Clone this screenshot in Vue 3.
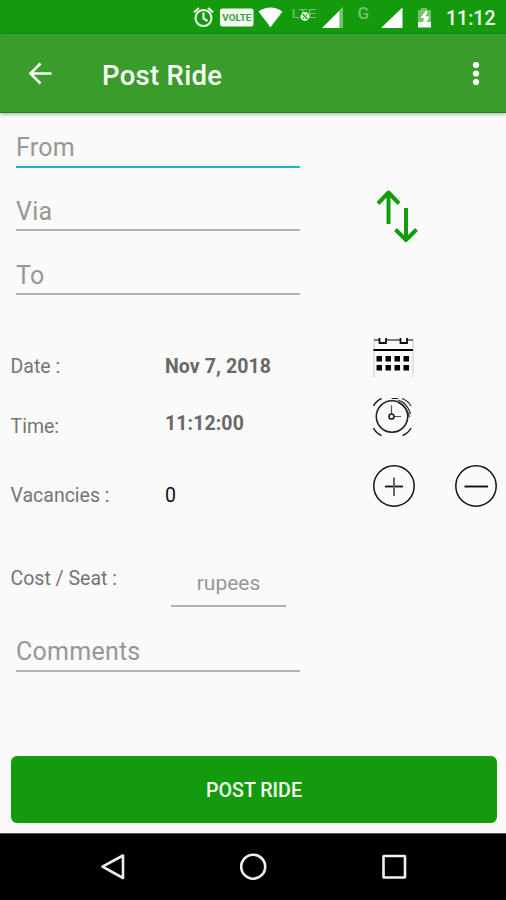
<script setup>
import { ref } from 'vue'

const route = [
  { label: 'From', size: 'first', focused: true },
  { label: 'Via', size: 'second', focused: false },
  { label: 'To', size: 'third', focused: false },
]
const date = ref('Nov 7, 2018')
const time = ref('11:12:00')
const vacancies = ref(0)
const dayColumns = [3.5, 12.5, 21.5, 30.5]
const dayRows = [19, 28]
</script>

<template>
  <div class="screen">
    <header class="status">
      <svg class="status-icons" width="250" height="34" viewBox="0 0 250 34">
        <g fill="none" stroke="#f2fbf0" stroke-width="2.1">
          <circle cx="17.5" cy="18" r="8" />
          <path d="M17.5 12.5V18.5L21.5 21M8 12.2L13 8M27 12.2L22 8" />
        </g>
        <rect x="34" y="8.5" width="33.5" height="18" rx="2.5" fill="#f5fcf4" />
        <text x="50.8" y="20.8" class="volte" text-anchor="middle" textLength="29" lengthAdjust="spacingAndGlyphs">VOLTE</text>
        <path d="M72.5 11.5Q84.5 3.5 96.5 11.5L84.5 27.2Z" fill="#fff" />
        <text x="105.5" y="17.5" class="lte" textLength="25" lengthAdjust="spacingAndGlyphs">LTE</text>
        <circle cx="119" cy="16.5" r="4.4" fill="#e9f8e6" />
        <path d="M116.5 14L121.5 19M117 18.5L118 17.5M120 15.5L121 14.5" stroke="#159c0e" stroke-width="1.2" />
        <path d="M153.5 10L157 7V28H153.5Z" fill="#72c36c" />
        <path d="M136 28L153.5 10.5V28Z" fill="#fff" />
        <text x="171.5" y="19" class="carrier">G</text>
        <path d="M195 28L216.5 7.5V28Z" fill="#fff" />
        <path d="M232 10H235V8H241V10H245V22H232Z" fill="#72c36c" />
        <path d="M232 22H245V27.5H232Z" fill="#fff" />
        <path d="M239.5 11L234.5 18H238L236.5 24H240L243.5 16.5H239.5L242 11Z" fill="#fff" />
      </svg>
      <span class="clock">11:12</span>
    </header>

    <nav class="appbar">
      <svg class="back" width="26" height="26" viewBox="0 0 26 26">
        <path d="M24.5 13.5H3.5M13.5 3.5L3.5 13.5L13.5 23.5" fill="none" stroke="#fff" stroke-width="2.6" />
      </svg>
      <h1>Post Ride</h1>
      <svg class="more" width="8" height="26" viewBox="0 0 8 26" fill="#fff">
        <circle cx="4" cy="5" r="3.1" />
        <circle cx="4" cy="13.5" r="3.1" />
        <circle cx="4" cy="22" r="3.1" />
      </svg>
    </nav>

    <main>
      <section class="route">
        <div class="fields">
          <div v-for="f in route" :key="f.label" class="field" :class="[f.size, { focused: f.focused }]">
            {{ f.label }}
          </div>
        </div>
        <svg class="swap" width="42" height="56" viewBox="0 0 42 56" fill="none" stroke="#149c10" stroke-width="4" stroke-linejoin="round">
          <path d="M12.5 36V5M2 15.5L12.5 4.5L23 15.5" />
          <path d="M30 20V52M19.5 41.5L30 52L40.5 41.5" />
        </svg>
      </section>

      <section class="row date">
        <span class="label">Date :</span>
        <strong class="value">{{ date }}</strong>
        <svg class="icon" width="42" height="42" viewBox="0 0 42 42">
          <path d="M1 40V1M40 40V1" stroke="#ccc" stroke-width="1" />
          <path d="M1 3H6M13 3H27M34 3H40" stroke="#555" stroke-width="1.4" />
          <path d="M6.5 1V6H13V1M27.5 1V6H34V1" fill="none" stroke="#111" stroke-width="1.8" />
          <path d="M0.5 13H40" stroke="#000" stroke-width="2" />
          <template v-for="y in dayRows" :key="y">
            <rect v-for="x in dayColumns" :key="x" :x="x" :y="y" width="5.5" height="5.5" fill="#000" />
          </template>
        </svg>
      </section>

      <section class="row time">
        <span class="label">Time:</span>
        <strong class="value">{{ time }}</strong>
        <svg class="icon" width="42" height="42" viewBox="0 0 42 42" fill="none" stroke="#222">
          <circle cx="19" cy="19.5" r="15.7" stroke-width="1.6" />
          <path d="M18.5 8.5V17M21 19.5H28" stroke="#555" stroke-width="1.2" />
          <circle cx="18.5" cy="19.5" r="2.5" stroke-width="1.7" />
          <path d="M0.5 9Q3 4 8.5 1.5M0.5 31Q3 36 8.5 38.5M29.5 38.5Q35.5 36 38 31" stroke-width="1.5" />
          <path d="M18.5 1.5H25M29 1.5Q35.5 4 38 9M25 3Q34.5 6 37.5 17M25 5.5Q33.5 9 36.5 20" stroke-width="1.1" />
        </svg>
      </section>

      <section class="row vacancies">
        <span class="label">Vacancies :</span>
        <span class="value count">{{ vacancies }}</span>
        <svg class="icon" width="42" height="42" viewBox="0 0 42 42" fill="none" stroke="#111">
          <circle cx="21" cy="21" r="20.2" stroke-width="1.5" />
          <path d="M12 21.5H30" stroke-width="1.8" />
          <path d="M21 12.5V31" stroke="#666" stroke-width="2" />
        </svg>
        <svg class="icon" width="42" height="42" viewBox="0 0 42 42" fill="none" stroke="#111">
          <circle cx="21" cy="21" r="20.2" stroke-width="1.5" />
          <path d="M9.5 21.5H33" stroke-width="1.9" />
        </svg>
      </section>

      <section class="row cost">
        <span class="label">Cost / Seat :</span>
        <div class="rupees">rupees</div>
      </section>

      <div class="field comments">Comments</div>

      <button class="submit" type="button">POST RIDE</button>
    </main>

    <footer class="navbar">
      <svg width="28" height="28" viewBox="0 0 28 28"><path d="M25 2.5V25L4.5 13.7Z" /></svg>
      <svg width="28" height="28" viewBox="0 0 28 28"><circle cx="14.2" cy="13.7" r="12" /></svg>
      <svg width="28" height="28" viewBox="0 0 28 28"><rect x="3.5" y="3" width="21.5" height="21.5" rx="0.5" /></svg>
    </footer>
  </div>
</template>

<style>
body {
  margin: 0;
}
</style>

<style scoped>
.screen {
  width: 506px;
  height: 900px;
  display: flex;
  flex-direction: column;
  overflow: hidden;
  background: #fafafa;
  font-family: Roboto, "Liberation Sans", sans-serif;
}
svg {
  display: block;
  flex: none;
}
.status {
  height: 34px;
  flex: none;
  display: flex;
  justify-content: flex-end;
  background: #149b0d;
}
.clock {
  width: 60px;
  font-size: 19.5px;
  font-weight: 500;
  line-height: 38px;
  color: #f5fcf4;
  white-space: nowrap;
}
.status-icons {
  margin-right: 10px;
}
.volte {
  font-size: 9.5px;
  font-weight: 700;
  fill: #39a033;
}
.lte {
  font-size: 13px;
  font-weight: 400;
  fill: #72c36c;
}
.carrier {
  font-size: 17px;
  font-weight: 500;
  fill: #72c36c;
}
.appbar {
  height: 79px;
  flex: none;
  box-sizing: border-box;
  display: flex;
  align-items: center;
  padding: 0 26px 0 27px;
  background: #399c2b;
  border-bottom: 1px solid #168a10;
  box-shadow: 0 1px 4px rgba(0, 0, 0, 0.35);
}
h1 {
  flex: 1;
  margin: 6px 0 0 49px;
  font-size: 27.5px;
  font-weight: 500;
  line-height: 32px;
  letter-spacing: 0.3px;
  color: #fff;
}
main {
  flex: 1;
  display: flex;
  flex-direction: column;
}
.route {
  display: flex;
  height: 222px;
}
.fields {
  margin-left: 16px;
}
.field {
  box-sizing: border-box;
  width: 284px;
  display: flex;
  align-items: flex-end;
  padding-bottom: 3px;
  border-bottom: 2px solid #b1b1b1;
  font-size: 25px;
  line-height: 30px;
  letter-spacing: 0.25px;
  color: #979797;
}
.first {
  height: 55px;
}
.second {
  height: 63px;
  padding-bottom: 2px;
}
.third {
  height: 64px;
  padding-bottom: 2px;
}
.focused {
  border-bottom: 2px solid #22b1c6;
}
.swap {
  margin: 75px 0 0 76px;
}
.row {
  display: grid;
  grid-template-columns: 154px 208px 82px 42px;
  align-items: start;
  padding-left: 11px;
  font-size: 19.5px;
  line-height: 24px;
  color: #757575;
}
.row .label {
  margin-left: -0.5px;
}
.value {
  font-weight: 700;
  letter-spacing: 0.1px;
  color: #686868;
}
.date {
  height: 45px;
}
.date .label,
.date .value {
  margin-top: 20px;
}
.date .icon {
  margin-top: 2px;
}
.time {
  height: 70px;
}
.time .label {
  margin-top: 35px;
}
.time .value {
  margin-top: 32px;
}
.time .icon {
  margin-top: 17px;
}
.vacancies {
  height: 100px;
}
.vacancies .label,
.vacancies .value {
  margin-top: 34px;
}
.vacancies .icon {
  margin-top: 15px;
}
.vacancies .count {
  font-weight: 400;
  color: #111;
}
.cost {
  height: 57px;
}
.cost .label {
  margin-top: 17px;
}
.rupees {
  box-sizing: border-box;
  width: 115px;
  height: 57px;
  margin-left: 6px;
  padding-top: 21px;
  border-bottom: 2px solid #b1b1b1;
  font-size: 21px;
  text-align: center;
  color: #979797;
}
.comments {
  height: 65px;
  margin-left: 16px;
}
.submit {
  height: 67px;
  margin: 84px 9px 0 11px;
  padding: 3px 0 0;
  border: 0;
  border-radius: 6px;
  background: #149b0d;
  font: 500 19.6px/24px Roboto, "Liberation Sans", sans-serif;
  color: #f5fcf4;
}
.navbar {
  height: 67px;
  flex: none;
  box-sizing: border-box;
  display: flex;
  justify-content: center;
  align-items: center;
  gap: 113px;
  border-top: 1px solid #555;
  background: #000;
}
.navbar svg {
  fill: none;
  stroke: #f0f0f0;
  stroke-width: 2.6;
  stroke-linejoin: round;
}
</style>
